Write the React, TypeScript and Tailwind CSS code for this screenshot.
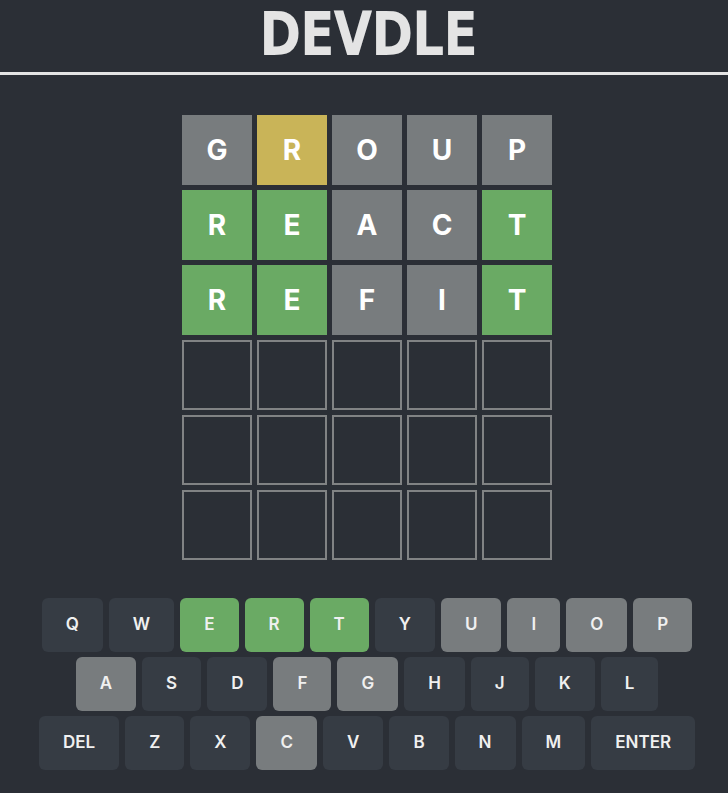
import React from "react";

type State = "gray" | "yellow" | "green" | "none";

const tileBg: Record<State, string> = {
  gray: "bg-[#787c7e] border-[#787c7e]",
  yellow: "bg-[#c9b458] border-[#c9b458]",
  green: "bg-[#6aaa64] border-[#6aaa64]",
  none: "bg-transparent border-[#818384]",
};

const keyBg: Record<State, string> = {
  gray: "bg-[#787c7e]",
  yellow: "bg-[#c9b458]",
  green: "bg-[#6aaa64]",
  none: "bg-[#363c44]",
};

const guesses: [string, State][][] = [
  [["G", "gray"], ["R", "yellow"], ["O", "gray"], ["U", "gray"], ["P", "gray"]],
  [["R", "green"], ["E", "green"], ["A", "gray"], ["C", "gray"], ["T", "green"]],
  [["R", "green"], ["E", "green"], ["F", "gray"], ["I", "gray"], ["T", "green"]],
];

const keyStates: Record<string, State> = {
  E: "green", R: "green", T: "green",
  U: "gray", I: "gray", O: "gray", P: "gray",
  A: "gray", F: "gray", G: "gray", C: "gray",
};

const rows = [
  ["Q", "W", "E", "R", "T", "Y", "U", "I", "O", "P"],
  ["A", "S", "D", "F", "G", "H", "J", "K", "L"],
  ["DEL", "Z", "X", "C", "V", "B", "N", "M", "ENTER"],
];

const Tile: React.FC<{ letter?: string; state: State }> = ({ letter, state }) => (
  <div className={`w-[70px] h-[70px] border-2 flex items-center justify-center text-[28px] font-bold text-white ${tileBg[state]}`}>
    {letter}
  </div>
);

export default function App() {
  const board: [string, State][][] = [...guesses];
  while (board.length < 6) board.push(Array(5).fill(["", "none"]));

  return (
    <div className="min-h-[793px] bg-[#2b2f36] text-white" style={{ fontFamily: "Inter, 'Noto Sans', sans-serif" }}>
      <header className="h-[75px] border-b-[3px] border-[#e4e4e4] flex items-center justify-center pl-[8px]">
        <h1
          className="text-[60px] font-bold leading-none text-[#e4e4e4] tracking-[-1px] scale-x-[0.835] mt-[-4px]"
          style={{ fontFamily: "'DejaVu Sans', sans-serif" }}
        >
          DEVDLE
        </h1>
      </header>

      <main className="flex flex-col items-center pl-[6px]">
        <div className="mt-[40px] flex flex-col gap-[5px]">
          {board.map((row, r) => (
            <div key={r} className="flex gap-[5px]">
              {row.map(([l, s], c) => (
                <Tile key={c} letter={l} state={s} />
              ))}
            </div>
          ))}
        </div>

        <div className="mt-[38px] flex flex-col items-center gap-[5px]">
          {rows.map((row, r) => (
            <div key={r} className="flex gap-[6px]">
              {row.map((k) => (
                <button
                  key={k}
                  className={`h-[54px] rounded-[6px] px-[24px] flex items-center justify-center text-[17px] font-semibold text-[#f0f0f0] ${keyBg[keyStates[k] ?? "none"]}`}
                >
                  {k}
                </button>
              ))}
            </div>
          ))}
        </div>
      </main>
    </div>
  );
}
